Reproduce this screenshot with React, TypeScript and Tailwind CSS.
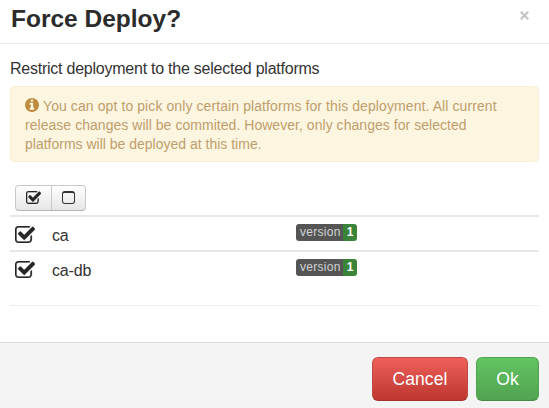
import React from "react";

function CheckIcon({ className }: { className: string }) {
  return (
    <svg viewBox="0 128 1664 1408" preserveAspectRatio="none" fill="currentColor" className={className} aria-hidden="true">
      <path stroke="currentColor" strokeWidth="20" d="M1408 930v318q0 119-84.5 203.5t-203.5 84.5h-832q-119 0-203.5-84.5t-84.5-203.5v-832q0-119 84.5-203.5t203.5-84.5h832q63 0 117 25 15 7 18 23 3 17-9 29l-49 49q-10 10-23 10-3 0-9-2-23-6-45-6h-832q-66 0-113 47t-47 113v832q0 66 47 113t113 47h832q66 0 113-47t47-113v-254q0-13 9-22l64-64q10-10 23-10 6 0 12 3 20 8 20 29zm231-489l-814 814q-24 24-57 24t-57-24l-430-430q-24-24-24-57t24-57l110-110q24-24 57-24t57 24l263 263 647-647q24-24 57-24t57 24l110 110q24 24 24 57t-24 57z" />
    </svg>
  );
}

function InfoIcon() {
  return (
    <svg viewBox="128 128 1536 1536" fill="currentColor" className="mr-[4px] inline-block h-[14px] w-[14px] align-[-1px] text-[#bd8c3c]" aria-hidden="true">
      <path d="M1152 1376v-160q0-14-9-23t-23-9h-96v-512q0-14-9-23t-23-9h-320q-14 0-23 9t-9 23v160q0 14 9 23t23 9h96v320h-96q-14 0-23 9t-9 23v160q0 14 9 23t23 9h448q14 0 23-9t9-23zm-128-896v-160q0-14-9-23t-23-9h-192q-14 0-23 9t-9 23v160q0 14 9 23t23 9h192q14 0 23-9t9-23zm640 416q0 209-103 385.5t-279.5 279.5-385.5 103-385.5-103-279.5-279.5-103-385.5 103-385.5 279.5-279.5 385.5-103 385.5 103 279.5 279.5 103 385.5z" />
    </svg>
  );
}

function PlatformRow({ name }: { name: string }) {
  return (
    <div className="flex h-[35px] items-start border-t-2 border-[#e8e8e8] pl-[5px]">
      <CheckIcon className="mt-[9px] h-[17px] w-[20px] text-[#262626]" />
      <span className="ml-[17px] mt-[9px] w-[244px] text-[16px] leading-[20px] tracking-[-0.15px]">{name}</span>
      <span className="mt-[7px] flex h-[17px] overflow-hidden rounded-[3px] text-[12px] leading-[17px]">
        <span className="w-[47px] bg-[#555] pl-[4px] tracking-[0.3px] text-[#d2d2d2]">version</span>
        <span className="w-[14px] bg-[#398439] text-center font-bold text-white">1</span>
      </span>
    </div>
  );
}

export default function App() {
  return (
    <div className="flex h-[408px] w-[549px] flex-col overflow-hidden bg-white font-['Liberation_Sans',Arial,sans-serif] text-[#333]">
      <header className="flex h-[44px] items-start justify-between border-b border-[#ebebeb] pl-[11px] pr-[20px]">
        <h3 className="mt-[5px] text-[24.5px] font-bold leading-[28px] text-[#2b2b2b]">Force Deploy?</h3>
        <button aria-label="Close" className="mt-[11px] text-[#c4c4c4]">
          <svg viewBox="0 0 10 10" className="h-[9px] w-[9px]" stroke="currentColor" strokeWidth="2.4" fill="none">
            <path d="M.8.8 9.2 9.2M9.2.8.8 9.2" />
          </svg>
        </button>
      </header>
      <main className="flex h-[298px] flex-col pl-[10px] pr-[10px]">
        <p className="mt-[15px] whitespace-nowrap text-[16px] leading-[20px] tracking-[-0.24px]">Restrict deployment to the selected platforms</p>
        <div className="mt-[7px] h-[76px] rounded-[4px] border border-[#fbeed5] bg-[#fcf6e1] pl-[14px] pt-[10px] text-[14px] leading-[19px] text-[#c09d6c]">
          <div className="h-[19px] whitespace-nowrap tracking-[0.09px]"><InfoIcon />You can opt to pick only certain platforms for this deployment. All current</div>
          <div className="whitespace-nowrap tracking-[0.04px]">release changes will be commited. However, only changes for selected</div>
          <div className="whitespace-nowrap">platforms will be deployed at this time.</div>
        </div>
        <div className="ml-[5px] mt-[23px] flex h-[26px] w-[71px] shrink-0 rounded-[4px] border border-[#c9c9c9] border-b-[#b5b5b5] bg-linear-to-b from-white to-[#e6e6e6]">
          <button className="flex w-[36px] justify-center border-r border-[#c9c9c9] pt-[5px] text-[#262626]">
            <CheckIcon className="h-[13px] w-[15px]" />
          </button>
          <button className="flex flex-1 justify-center pt-[5px]">
            <span className="h-[13px] w-[13px] rounded-[3px] border border-t-2 border-[#333]" />
          </button>
        </div>
        <div className="mt-[4px] h-[91px] border-b border-[#eee]">
          <PlatformRow name="ca" />
          <PlatformRow name="ca-db" />
        </div>
      </main>
      <footer className="flex flex-1 justify-end gap-[8px] border-t border-[#ddd] bg-[#f4f4f4] pr-[10px] pt-[14px] text-[17.5px] text-white [text-shadow:0_-1px_0_rgba(0,0,0,0.25)]">
        <button className="h-[44px] w-[96px] rounded-[6px] border border-[#b94a48] border-b-[#a4302b] bg-linear-to-b from-[#ee5f5b] to-[#bd362f] tracking-[0.1px]">Cancel</button>
        <button className="h-[44px] w-[63px] rounded-[6px] border border-[#51a351] border-b-[#448c44] bg-linear-to-b from-[#62c462] to-[#51a351]">Ok</button>
      </footer>
    </div>
  );
}
